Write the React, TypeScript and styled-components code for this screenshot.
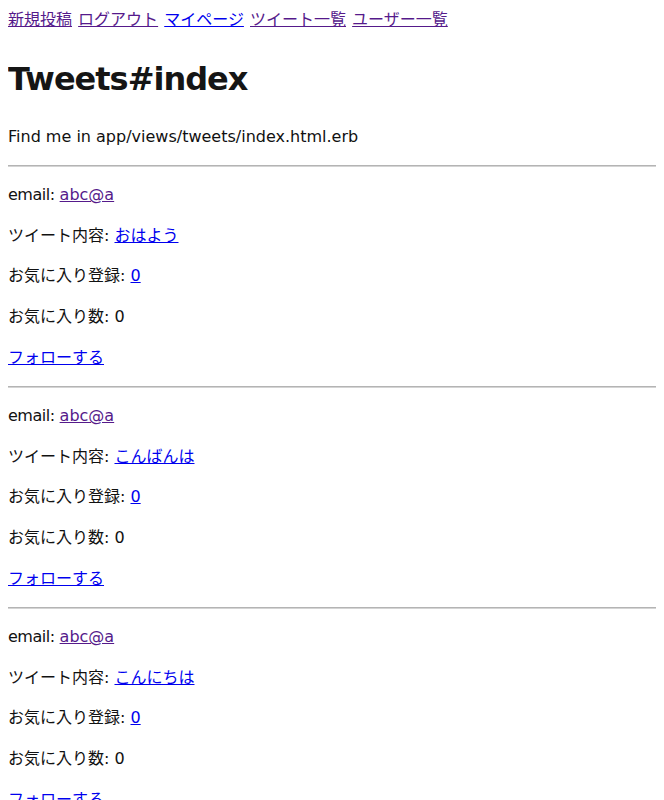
import React from "react";
import styled, { createGlobalStyle } from "styled-components";

const Global = createGlobalStyle`
  body {
    margin: 8px;
    font-family: "DejaVu Sans", "Noto Sans CJK JP", sans-serif;
    font-size: 16px;
    line-height: 24.6px;
    color: #000;
    background: #fff;
  }
`;

const Nav = styled.div`
  display: block;
  white-space: nowrap;
  word-spacing: 1px;
`;

const Link = styled.a<{ $visited?: boolean }>`
  color: ${(p) => (p.$visited ? "#551a8b" : "#0000ee")};
  text-decoration: underline;
  cursor: pointer;
`;

const Title = styled.h1`
  font-size: 32px;
  line-height: 49px;
  font-weight: 700;
  letter-spacing: -1px;
  margin: 22px 0 21px;
  color: #151515;
`;

const Para = styled.p`
  margin: 16px 0;
  color: #111;
`;

const Label = styled.span`
  letter-spacing: -0.5px;
`;

const Rule = styled.hr`
  margin: 8px 0;
  width: calc(100% + 8px);
  border: 0;
  border-top: 1px solid #b4b4b4;
  border-bottom: 1px solid #d4d4d4;
  height: 0;
`;

type Tweet = { email: string; content: string };

const tweets: Tweet[] = [
  { email: "abc@a", content: "おはよう" },
  { email: "abc@a", content: "こんばんは" },
  { email: "abc@a", content: "こんにちは" },
];

const navLinks: { label: string; visited: boolean }[] = [
  { label: "新規投稿", visited: true },
  { label: "ログアウト", visited: true },
  { label: "マイページ", visited: false },
  { label: "ツイート一覧", visited: true },
  { label: "ユーザー一覧", visited: true },
];

export default function App() {
  return (
    <>
      <Global />
      <Nav>
        {navLinks.map((l, i) => (
          <React.Fragment key={l.label}>
            {i > 0 && " "}
            <Link $visited={l.visited}>{l.label}</Link>
          </React.Fragment>
        ))}
      </Nav>
      <Title>Tweets#index</Title>
      <Para>Find me in app/views/tweets/index.html.erb</Para>
      {tweets.map((t, i) => (
        <React.Fragment key={i}>
          <Rule />
          <Para>
            <Label>email:</Label> <Link $visited>{t.email}</Link>
          </Para>
          <Para>
            ツイート内容: <Link>{t.content}</Link>
          </Para>
          <Para>
            お気に入り登録: <Link>0</Link>
          </Para>
          <Para>お気に入り数: 0</Para>
          <Para>
            <Link>フォローする</Link>
          </Para>
        </React.Fragment>
      ))}
    </>
  );
}
